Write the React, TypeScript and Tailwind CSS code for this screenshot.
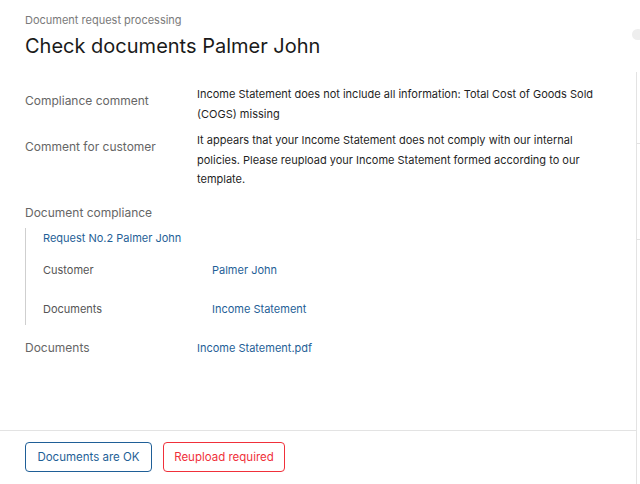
import React from "react";

const font = { fontFamily: "Inter, Roboto, 'Liberation Sans', sans-serif" };

export default function App() {
  return (
    <div className="relative w-[640px] h-[484px] bg-white overflow-hidden flex" style={font}>
      <div className="w-[636px] h-full flex flex-col">
        <div className="flex-1 px-[25px]">
          <div className="pt-[13px] text-[11px] leading-[14px] text-[#7a7a7a]">Document request processing</div>
          <div className="mt-[7px] text-[20px] leading-[24px] text-[#1a1a1a]">Check documents Palmer John</div>

          <div className="mt-[27px] flex">
            <div className="w-[172px] shrink-0 pt-[8px] text-[12px] leading-[16px] text-[#666]">Compliance comment</div>
            <div className="text-[11px] leading-[19.5px] text-[#1f1f1f] w-[410px]">
              Income Statement does not include all information: Total Cost of Goods Sold (COGS) missing
            </div>
          </div>
          <div className="mt-[7px] flex">
            <div className="w-[172px] shrink-0 pt-[8px] text-[12px] leading-[16px] text-[#666]">Comment for customer</div>
            <div className="text-[11px] leading-[19.5px] text-[#1f1f1f] w-[385px]">
              It appears that your Income Statement does not comply with our internal policies. Please reupload your Income Statement formed according to our template.
            </div>
          </div>

          <div className="mt-[15px] text-[12px] leading-[16px] text-[#666]">Document compliance</div>
          <div className="mt-[7px] border-l border-[#cfcfcf] pl-[17px] pb-[8px]">
            <div className="pt-[2px] text-[11px] leading-[16px] text-[#1f5f97]">Request No.2 Palmer John</div>
            <div className="mt-[16px] flex items-center">
              <div className="w-[169px] shrink-0 text-[11px] leading-[16px] text-[#555]">Customer</div>
              <div className="text-[11px] leading-[16px] text-[#1f5f97]">Palmer John</div>
            </div>
            <div className="mt-[23px] flex items-center">
              <div className="w-[169px] shrink-0 text-[11px] leading-[16px] text-[#555]">Documents</div>
              <div className="text-[11px] leading-[16px] text-[#1f5f97]">Income Statement</div>
            </div>
          </div>
          <div className="mt-[15px] flex items-center">
            <div className="w-[172px] shrink-0 text-[12px] leading-[16px] text-[#666]">Documents</div>
            <div className="text-[11px] leading-[16px] text-[#1f5f97]">Income Statement.pdf</div>
          </div>
        </div>
        <div className="border-t border-[#e3e3e3] h-[54px] px-[25px] flex items-start pt-[11px] gap-[11px]">
          <button className="h-[30px] w-[127px] pt-[2px] rounded-[4px] border border-[#1f5f97] text-[11.5px] text-[#1f5f97] bg-white">
            Documents are OK
          </button>
          <button className="h-[30px] w-[122px] pt-[2px] rounded-[4px] border border-[#f0303a] text-[11.5px] text-[#f0303a] bg-white">
            Reupload required
          </button>
        </div>
      </div>
      <div className="w-[4px] h-full relative">
        <div className="absolute left-[-4px] top-[29px] w-[12px] h-[11px] rounded-full bg-[#eeeeee]" />
        <div className="absolute left-0 top-[72px] bottom-0 border-l border-[#e3e3e3]" />
        <div className="absolute left-0 top-[143px] w-[4px] border-t border-[#e3e3e3]" />
        <div className="absolute left-0 top-[239px] w-[4px] border-t border-[#e3e3e3]" />
      </div>
    </div>
  );
}
